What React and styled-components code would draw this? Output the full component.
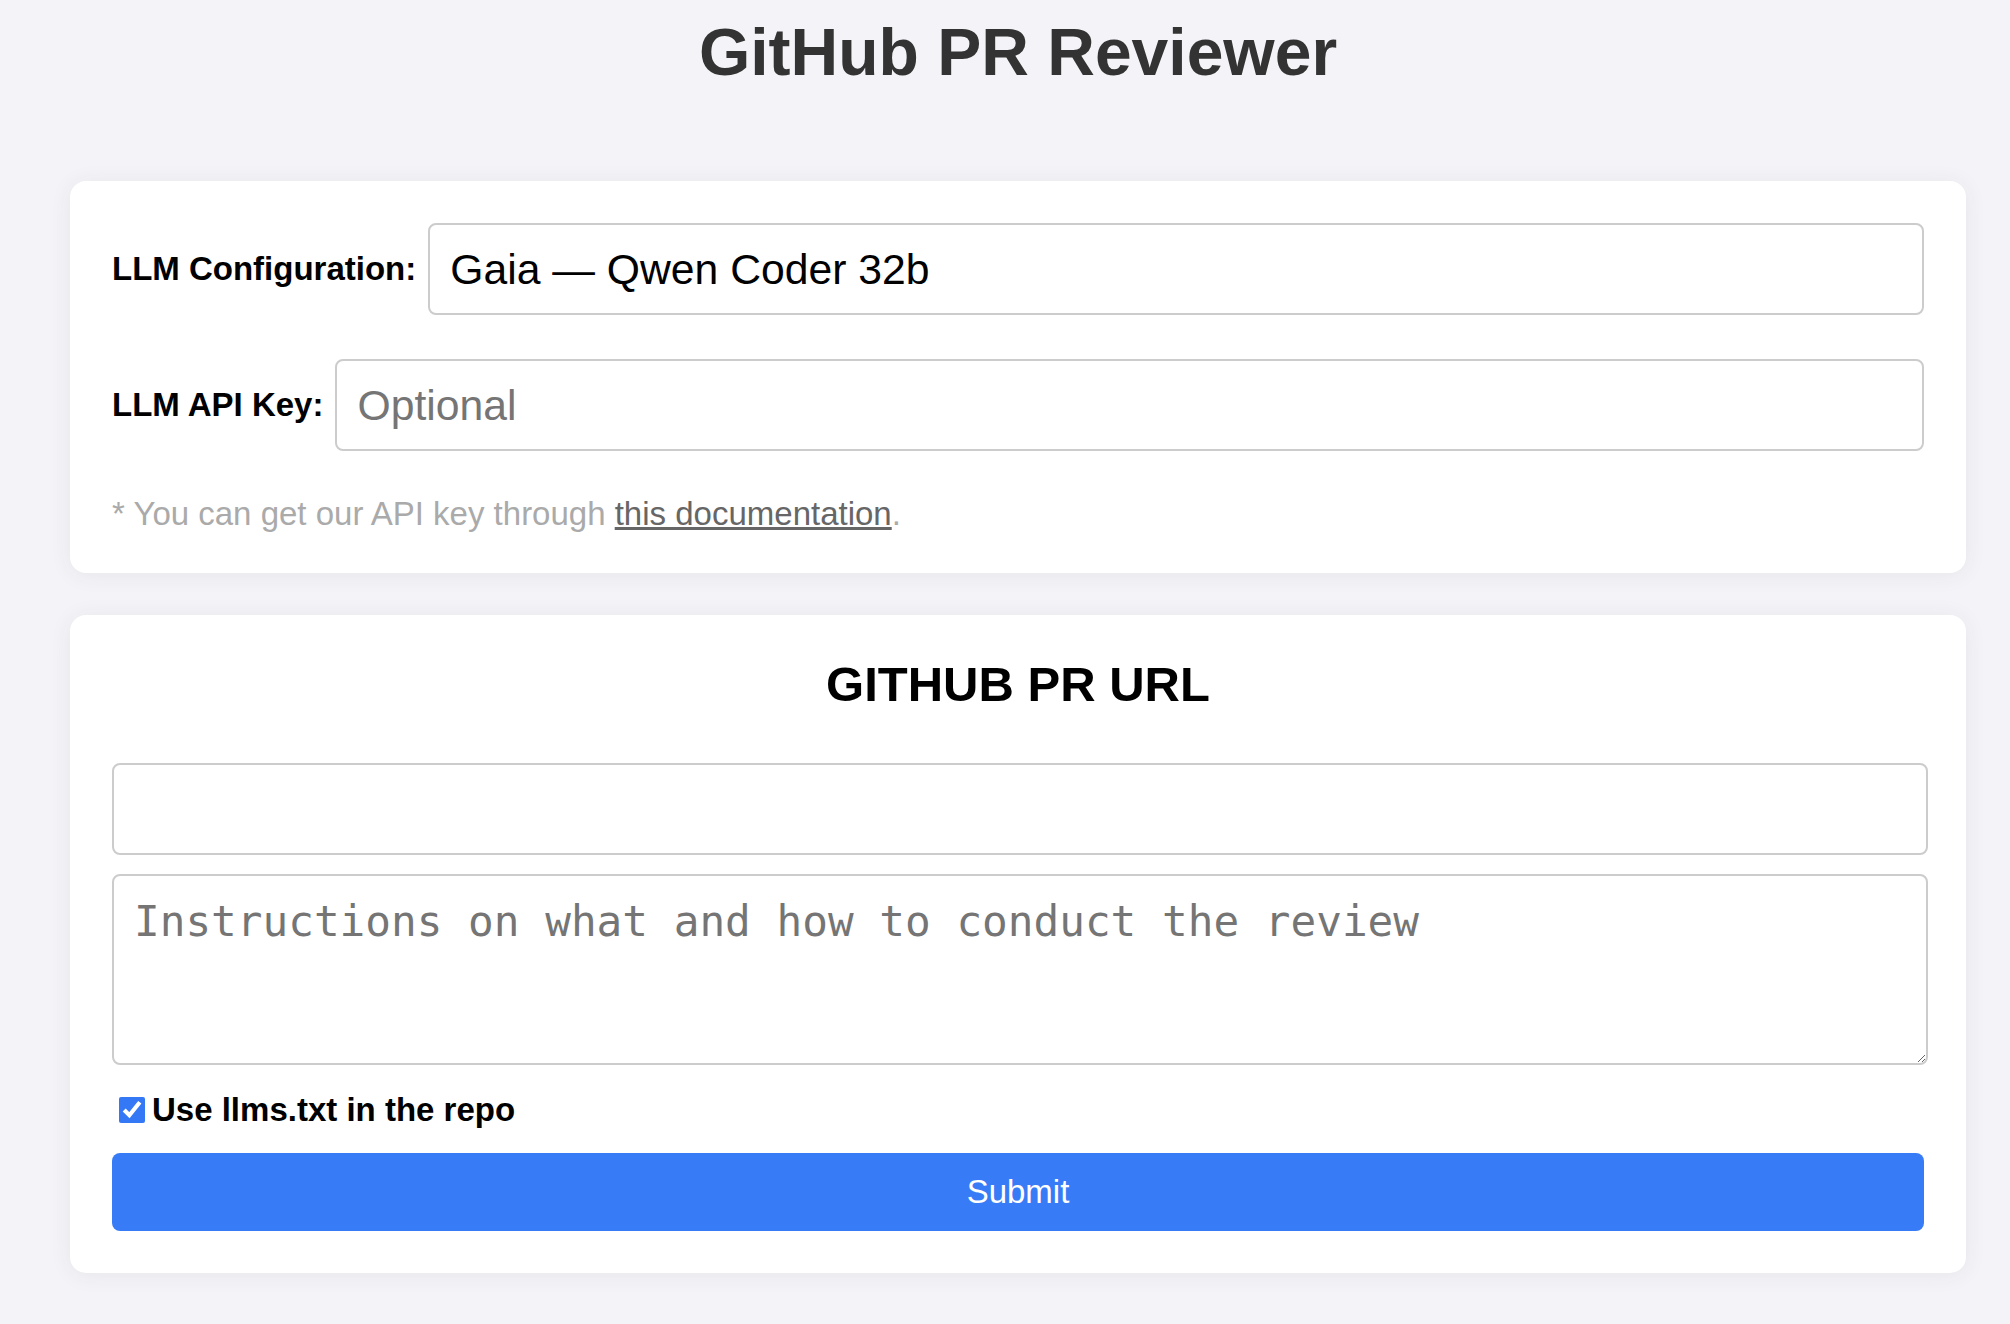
import React, { useState } from 'react';
import styled, { createGlobalStyle } from 'styled-components';

const GlobalStyle = createGlobalStyle`
  body {
    margin: 0;
    background: #f4f4f8;
    font-family: "Liberation Sans", Arial, Helvetica, sans-serif;
    font-size: 33px;
  }
`;

const Page = styled.div`
  padding: 14px 44px 40px 70px;
`;

const Title = styled.h1`
  margin: 0 0 91px;
  text-align: center;
  font-size: 66px;
  font-weight: 700;
  color: #333;
`;

const Card = styled.section`
  background: #fff;
  border-radius: 16px;
  box-shadow: 0 2px 22px rgba(30, 30, 60, 0.07);
  padding: 42px 42px ${props => props.bottom || '42px'};
  margin-bottom: 42px;
  display: flex;
  flex-direction: column;
`;

const FieldRow = styled.div`
  display: flex;
  align-items: center;
  gap: 12px;
  margin-bottom: 44px;
`;

const Label = styled.label`
  font-weight: 700;
  font-size: 33px;
  color: #000;
  white-space: nowrap;
`;

const fieldBase = `
  box-sizing: border-box;
  height: 92px;
  padding: 0 20px;
  border: 2px solid #ccc;
  border-radius: 8px;
  background: #fff;
  font-family: "Liberation Sans", Arial, Helvetica, sans-serif;
  font-size: 42.7px;
  color: #000;
  outline: none;
  &::placeholder {
    color: #757575;
  }
`;

const Select = styled.select`
  ${fieldBase}
  flex: 1;
  appearance: none;
  -webkit-appearance: none;
`;

const TextInput = styled.input`
  ${fieldBase}
  flex: ${props => (props.wide ? 'none' : 1)};
  width: ${props => (props.wide ? 'calc(100% + 4px)' : 'auto')};
`;

const Note = styled.p`
  margin: 0;
  font-size: 33px;
  line-height: 37px;
  color: #aaa;
`;

const DocLink = styled.a`
  color: #666;
  text-decoration: underline;
`;

const SectionTitle = styled.h2`
  margin: 0 0 51px;
  text-align: center;
  font-size: 49px;
  line-height: 55px;
  font-weight: 700;
  color: #000;
`;

const Instructions = styled.textarea`
  ${fieldBase}
  width: calc(100% + 4px);
  height: 191px;
  margin-top: 19px;
  padding: 20px;
  font-family: "DejaVu Sans Mono", Menlo, monospace;
  font-size: 42.7px;
  resize: vertical;
`;

const CheckRow = styled.label`
  display: flex;
  align-items: center;
  margin: 26px 0 25px;
  font-weight: 700;
  font-size: 33px;
  line-height: 37px;
  color: #000;
`;

const Checkbox = styled.input`
  width: 26px;
  height: 26px;
  margin: 0 7px 0 7px;
  accent-color: #3478f6;
`;

const SubmitButton = styled.button`
  height: 78px;
  border: none;
  border-radius: 8px;
  background: #377cf6;
  color: #fff;
  font-family: "Liberation Sans", Arial, Helvetica, sans-serif;
  font-size: 33px;
  cursor: pointer;
  &:hover {
    background: #2c6de0;
  }
`;

const App = () => {
  const [model, setModel] = useState('qwen');
  const [useLlms, setUseLlms] = useState(true);

  return (
    <Page>
      <GlobalStyle />
      <Title>GitHub PR Reviewer</Title>

      <Card bottom="41px">
        <FieldRow>
          <Label>LLM Configuration:</Label>
          <Select value={model} onChange={e => setModel(e.target.value)}>
            <option value="qwen">Gaia — Qwen Coder 32b</option>
            <option value="llama">Gaia — Llama 3.1 8b</option>
          </Select>
        </FieldRow>
        <FieldRow>
          <Label>LLM API Key:</Label>
          <TextInput type="password" placeholder="Optional" />
        </FieldRow>
        <Note>
          * You can get our API key through <DocLink href="#">this documentation</DocLink>.
        </Note>
      </Card>

      <Card>
        <SectionTitle>GITHUB PR URL</SectionTitle>
        <TextInput wide type="text" />
        <Instructions placeholder="Instructions on what and how to conduct the review" />
        <CheckRow>
          <Checkbox
            type="checkbox"
            checked={useLlms}
            onChange={e => setUseLlms(e.target.checked)}
          />
          Use llms.txt in the repo
        </CheckRow>
        <SubmitButton>Submit</SubmitButton>
      </Card>
    </Page>
  );
};

export default App;
